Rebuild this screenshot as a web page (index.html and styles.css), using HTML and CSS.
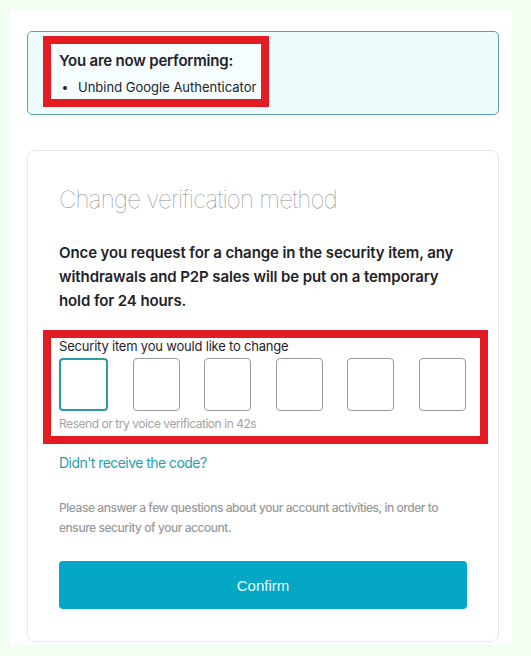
FILE: index.html
```html
<!DOCTYPE html>
<html lang="en">
<head>
<meta charset="utf-8">
<title>Change verification method</title>
<link rel="stylesheet" href="styles.css">
</head>
<body>
<div class="panel">
  <div class="notice">
    <div class="highlight highlight-notice">
      <div class="notice-title">You are now performing:</div>
      <ul class="notice-list">
        <li>Unbind Google Authenticator</li>
      </ul>
    </div>
  </div>

  <div class="card">
    <h1 class="card-title">Change verification method</h1>
    <p class="card-text">Once you request for a change in the security item, any withdrawals and P2P sales will be put on a temporary hold for 24 hours.</p>

    <div class="highlight highlight-code">
      <div class="code-label">Security item you would like to change</div>
      <div class="code-row">
        <div class="code-box code-box-active"></div>
        <div class="code-box"></div>
        <div class="code-box"></div>
        <div class="code-box"></div>
        <div class="code-box"></div>
        <div class="code-box"></div>
      </div>
      <div class="code-hint">Resend or try voice verification in 42s</div>
    </div>

    <a class="code-link" href="#">Didn't receive the code?</a>

    <p class="card-note">Please answer a few questions about your account activities, in order to ensure security of your account.</p>

    <button class="confirm" type="button">Confirm</button>
  </div>
</div>
</body>
</html>
```

FILE: styles.css
```css
* {
  box-sizing: border-box;
}

body {
  margin: 0;
  padding: 10px 19px 11px 10px;
  background: #f1fef1;
  font-family: Inter, "Liberation Sans", sans-serif;
  color: #1e2329;
}

.panel {
  background: #ffffff;
  padding: 21px 13px 3px 17px;
}

.notice {
  height: 84px;
  border: 1px solid #5b9fae;
  border-radius: 5px;
  background: #eefbfd;
  padding: 4px 0 0 15px;
}

.highlight {
  border: 8px solid #e31b23;
  background: #ffffff;
}

.highlight-notice {
  width: 226px;
  height: 71px;
  padding: 7px 0 0 8px;
  background: #f5fdfe;
}

.notice-title {
  font-size: 15px;
  font-weight: 600;
  line-height: 20px;
  letter-spacing: -0.2px;
  color: #1e2329;
}

.notice-list {
  margin: 7px 0 0;
  padding: 0 0 0 19px;
  font-size: 13px;
  line-height: 18px;
  letter-spacing: 0;
  color: #1e2329;
}

.card {
  margin-top: 35px;
  height: 492px;
  border: 1px solid #e6e8ea;
  border-radius: 8px;
  padding: 0 32px 0 31px;
}

.card-title {
  margin: 33px 0 0;
  font-size: 24px;
  font-weight: 100;
  line-height: 32px;
  letter-spacing: -0.75px;
  color: #8a8a8a;
}

.card-text {
  margin: 25px 0 0;
  font-size: 15px;
  font-weight: 600;
  line-height: 24px;
  letter-spacing: -0.1px;
  color: #1e2329;
}

.highlight-code {
  margin: 17px -22px 0 -16px;
  height: 114px;
  padding: 0 0 0 8px;
}

.code-label {
  font-size: 13px;
  line-height: 16px;
  letter-spacing: -0.2px;
  color: #1e2329;
}

.code-row {
  display: flex;
  justify-content: space-between;
  width: 407px;
  margin-top: 4px;
}

.code-box {
  width: 47px;
  height: 53px;
  border: 1px solid #9a9a9a;
  border-radius: 4px;
}

.code-box-active {
  width: 49px;
  border: 2px solid #2b9aa6;
}

.code-hint {
  margin-top: 6px;
  font-size: 12px;
  line-height: 14px;
  letter-spacing: -0.45px;
  color: #a3a3a3;
}

.code-link {
  display: block;
  margin-top: 10px;
  font-size: 14px;
  line-height: 18px;
  letter-spacing: -0.55px;
  color: #2a9db1;
  text-decoration: none;
}

.card-note {
  margin: 26px 0 0;
  font-size: 12px;
  font-weight: 500;
  line-height: 20px;
  letter-spacing: -0.45px;
  color: #9a9a9a;
}

.confirm {
  display: block;
  width: 408px;
  height: 48px;
  margin-top: 23px;
  border: 0;
  border-radius: 4px;
  background: #04a7c4;
  color: #e8fcff;
  font-family: "Liberation Sans", Arial, sans-serif;
  font-size: 15px;
}
```
